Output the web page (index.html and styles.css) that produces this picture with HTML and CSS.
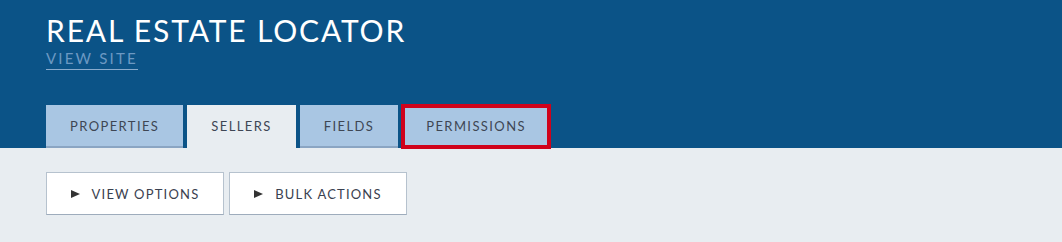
FILE: index.html
```html
<!DOCTYPE html>
<html>
<head>
<meta charset="utf-8">
<link rel="stylesheet" href="styles.css">
</head>
<body>
<header class="header">
  <div class="brand">
    <h1 class="title">REAL ESTATE LOCATOR</h1>
    <a class="view-site" href="#">VIEW SITE</a>
  </div>
  <nav class="tabs">
    <a class="tab" href="#">PROPERTIES</a>
    <a class="tab tab-active" href="#">SELLERS</a>
    <a class="tab" href="#">FIELDS</a>
    <a class="tab tab-highlight" href="#">PERMISSIONS</a>
  </nav>
</header>
<main class="content">
  <div class="actions">
    <button class="btn"><span class="arrow"></span>VIEW OPTIONS</button>
    <button class="btn"><span class="arrow"></span>BULK ACTIONS</button>
  </div>
</main>
</body>
</html>
```
FILE: styles.css
```css
html, body {
  margin: 0;
  padding: 0;
}
body {
  background: #e8edf1;
  font-family: "Lato", "Noto Sans", sans-serif;
  width: 1062px;
  height: 242px;
  overflow: hidden;
}
.header {
  background: #0b5387;
  height: 148px;
  box-sizing: border-box;
  padding: 0 46px;
  display: flex;
  flex-direction: column;
  justify-content: space-between;
}
.brand {
  padding-top: 13px;
  display: flex;
  flex-direction: column;
  align-items: flex-start;
}
.title {
  margin: 0;
  font-size: 30px;
  line-height: 34px;
  font-weight: 400;
  color: #ffffff;
  letter-spacing: 1.85px;
}
.view-site {
  margin-top: 2px;
  font-size: 15px;
  line-height: 18px;
  color: #6c99c3;
  letter-spacing: 2.2px;
  text-decoration: none;
  border-bottom: 1px solid #88abcd;
  padding-bottom: 2px;
}
.tabs {
  display: flex;
  gap: 4px;
}
.tab {
  height: 43px;
  box-sizing: border-box;
  padding: 0 24px;
  display: flex;
  align-items: center;
  background: #a9c6e3;
  border-bottom: 2px solid #8aa5c3;
  color: #3e4654;
  font-size: 13px;
  letter-spacing: 1.4px;
  text-decoration: none;
}
.tab-active {
  background: #e8edf1;
  border-bottom-color: #e8edf1;
}
.tab-highlight {
  outline: 4px solid #d0021b;
  outline-offset: -3px;
}
.content {
  padding: 24px 46px;
}
.actions {
  display: flex;
  gap: 5px;
}
.btn {
  width: 178px;
  height: 43px;
  box-sizing: border-box;
  background: #ffffff;
  border: 1px solid #b6c2ce;
  border-bottom-color: #9eacbc;
  display: flex;
  align-items: center;
  justify-content: center;
  font-family: "Lato", "Noto Sans", sans-serif;
  font-size: 13px;
  letter-spacing: 1.2px;
  color: #3a4150;
  padding: 0;
}
.arrow {
  width: 0;
  height: 0;
  border-left: 9px solid #333333;
  border-top: 4.5px solid transparent;
  border-bottom: 4.5px solid transparent;
  margin-right: 12px;
}
```
